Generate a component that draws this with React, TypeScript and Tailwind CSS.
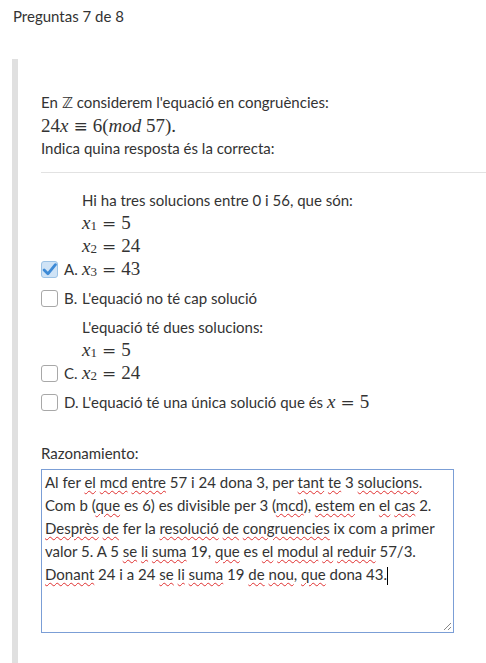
const M = ({ children }: { children: React.ReactNode }) => (
  <span className="font-['Liberation_Serif',serif] text-[19px] leading-none">{children}</span>
)

const Op = ({ c }: { c: string }) => (
  <span className="mx-[5px] font-['DejaVu_Serif',serif] text-[17px]">{c}</span>
)

const V = ({ v, sub }: { v: string; sub?: string }) => (
  <>
    <i>{v}</i>
    {sub && <sub className="text-[13px] not-italic relative top-[1px]">{sub}</sub>}
  </>
)

const Eq = ({ v, sub, n }: { v: string; sub?: string; n: string }) => (
  <M>
    <V v={v} sub={sub} />
    <Op c="=" />
    {n}
  </M>
)

const Box = ({ checked }: { checked?: boolean }) =>
  checked ? (
    <span className="w-[17px] h-[17px] rounded-[3px] border border-[#9cc3e6] bg-[#cfe3f6] flex items-center justify-center shrink-0">
      <svg width="15" height="15" viewBox="0 0 14 14">
        <path d="M2 7.5 L5.5 11 L12.5 2.5" fill="none" stroke="#3d8ad6" strokeWidth="2.6" strokeLinecap="round" strokeLinejoin="round" />
      </svg>
    </span>
  ) : (
    <span className="w-[17px] h-[17px] rounded-[3px] border border-[#a8a8a8] bg-white shrink-0" />
  )

const Option = ({ letter, checked, children }: { letter: string; checked?: boolean; children: React.ReactNode }) => (
  <div className="flex items-end">
    <span className="h-[23px] flex items-center">
      <Box checked={checked} />
    </span>
    <span className="ml-[6px] w-[18px]">{letter}.</span>
    <div>{children}</div>
  </div>
)

const W = ({ children }: { children: React.ReactNode }) => (
  <span className="underline decoration-wavy decoration-[#e03030] decoration-[0.5px] underline-offset-[2px]">{children}</span>
)

export default function App() {
  return (
    <div className="w-[486px] h-[663px] overflow-hidden bg-white text-[#333] font-['Lato',sans-serif] text-[15px] leading-[23px]">
      <div className="px-[13px] pt-[5px] h-[59px]">Preguntas 7 de 8</div>
      <div className="ml-[12px] border-l-[6px] border-[#e0e0e0] pl-[23px] pt-[32px] h-[604px]">
        <div>
          En <span className="font-['DejaVu_Sans',sans-serif] text-[15px]">ℤ</span> considerem l'equació en congruències:
        </div>
        <div className="h-[22px]">
          <M>
            24<i>x</i>
            <Op c="≡" />6(<i>mod</i> 57).
          </M>
        </div>
        <div>Indica quina resposta és la correcta:</div>
        <div className="border-t border-[#e2e2e2] mt-[12px] mb-[16px]" />
        <div className="flex flex-col gap-[6px]">
          <Option letter="A" checked>
            <div>Hi ha tres solucions entre 0 i 56, que són:</div>
            <div className="h-[23px]"><Eq v="x" sub="1" n="5" /></div>
            <div className="h-[23px]"><Eq v="x" sub="2" n="24" /></div>
            <div className="h-[23px]"><Eq v="x" sub="3" n="43" /></div>
          </Option>
          <Option letter="B">
            <div>L'equació no té cap solució</div>
          </Option>
          <Option letter="C">
            <div>L'equació té dues solucions:</div>
            <div className="h-[23px]"><Eq v="x" sub="1" n="5" /></div>
            <div className="h-[23px]"><Eq v="x" sub="2" n="24" /></div>
          </Option>
          <Option letter="D">
            <div className="h-[23px]">
              L'equació té una única solució que és <Eq v="x" n="5" />
            </div>
          </Option>
        </div>
        <div className="mt-[28px] mb-[4px]">Razonamiento:</div>
        <div className="relative w-[413px] h-[164px] border border-[#7b9ed6] px-[3px] pt-[1px] whitespace-nowrap">
          <div>Al fer <W>el</W> <W>mcd</W> <W>entre</W> 57 i 24 dona 3, per <W>tant</W> <W>te</W> 3 <W>solucions</W>.</div>
          <div>Com b (<W>que</W> es 6) es divisible per 3 (<W>mcd</W>), <W>estem</W> en <W>el</W> <W>cas</W> 2.</div>
          <div><W>Desprès</W> <W>de</W> fer la <W>resolució</W> <W>de</W> <W>congruencies</W> ix com a primer</div>
          <div>valor 5. A 5 <W>se</W> <W>li</W> <W>suma</W> 19, <W>que</W> es <W>el</W> <W>modul</W> <W>al</W> <W>reduir</W> 57/3.</div>
          <div>
            <W>Donant</W> 24 i a 24 <W>se</W> <W>li</W> <W>suma</W> 19 <W>de</W> <W>nou</W>, <W>que</W> dona 43.
            <span className="inline-block w-[1px] h-[18px] bg-black align-middle" />
          </div>
          <svg className="absolute right-[1px] bottom-[1px]" width="10" height="10" viewBox="0 0 10 10">
            <path d="M9 2 L2 9 M9 6 L6 9" stroke="#888" strokeWidth="1" />
          </svg>
        </div>
      </div>
    </div>
  )
}
